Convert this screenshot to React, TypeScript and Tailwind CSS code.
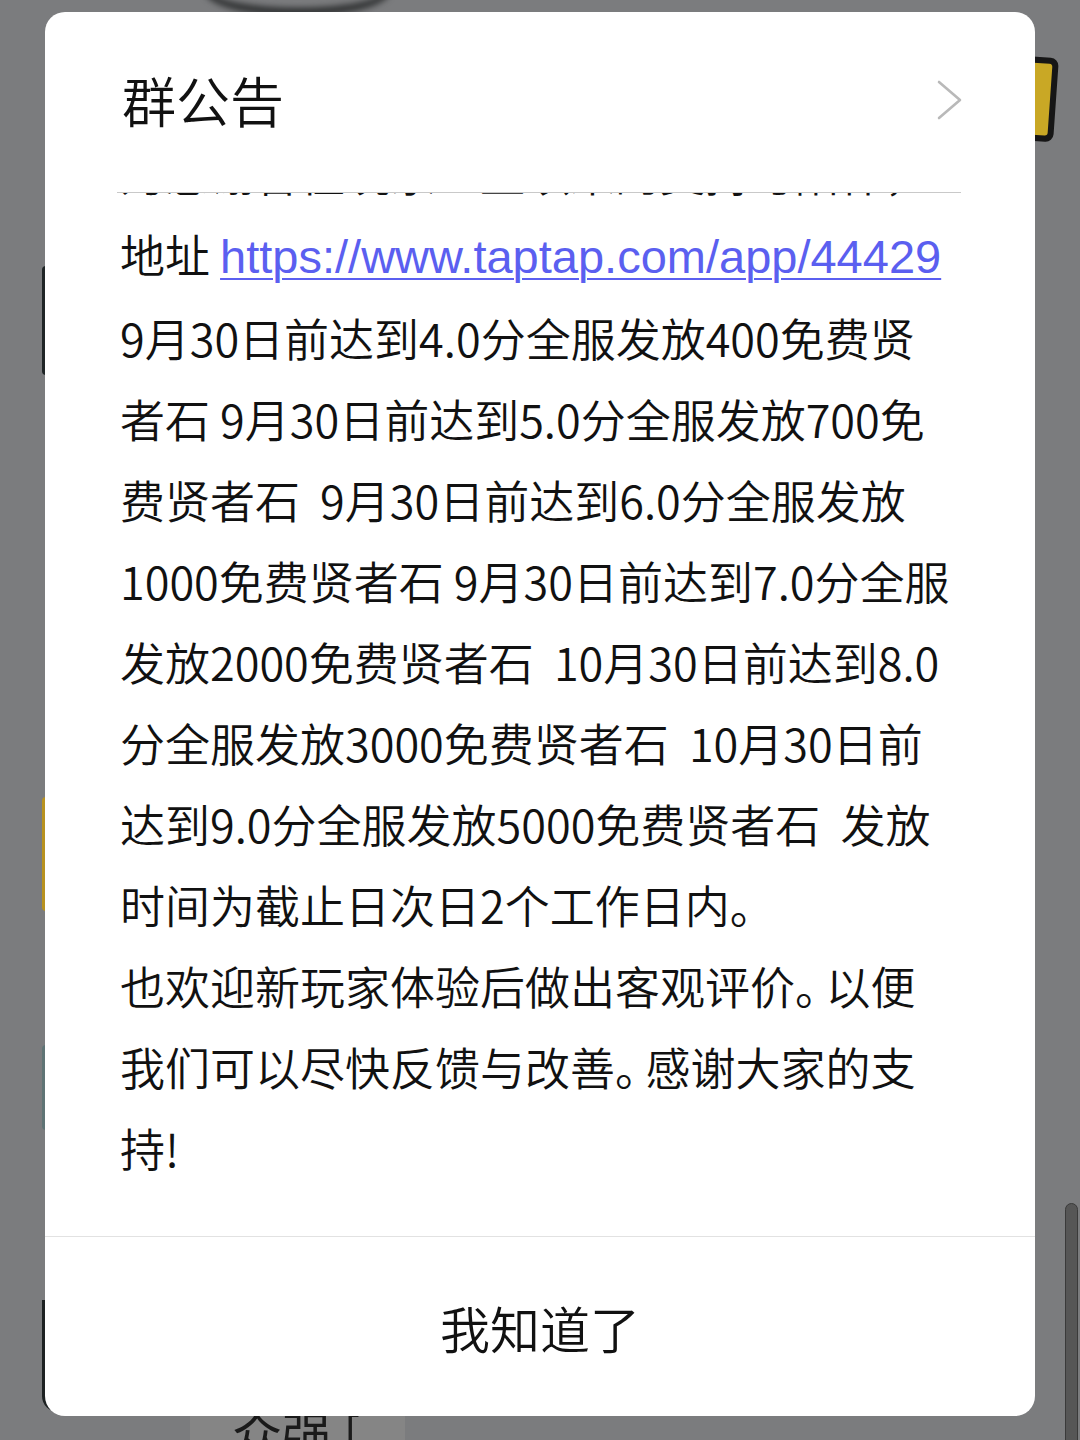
import React from "react";

const cjk = { fontFamily: '"Noto Sans CJK SC", "Noto Sans", sans-serif' };

// the full stop is set narrower than a full cell in the screenshot
const withStops = (text: string) =>
  text.split("。").flatMap((part, i, arr) =>
    i < arr.length - 1
      ? [
          part,
          <span key={i} className="mr-[8px] [font-feature-settings:'halt']">
            。
          </span>,
        ]
      : [part]
  );

// lines of the notice, wrapped as in the screenshot
const noticeLines: React.ReactNode[] = [
  "为感谢各位玩家一直以来的支持与陪伴，TapTap评价",
  <>
    地址{" "}
    <a
      href="#"
      className="text-[47px] font-normal text-[#5b5ff0] underline decoration-[2px] underline-offset-[5px]"
      style={{ fontFamily: '"Liberation Sans", Arial, sans-serif' }}
    >
      https://www.taptap.com/app/44429
    </a>
  </>,
  "9月30日前达到4.0分全服发放400免费贤",
  "者石 9月30日前达到5.0分全服发放700免",
  "费贤者石  9月30日前达到6.0分全服发放",
  "1000免费贤者石 9月30日前达到7.0分全服",
  "发放2000免费贤者石  10月30日前达到8.0",
  "分全服发放3000免费贤者石  10月30日前",
  "达到9.0分全服发放5000免费贤者石  发放",
  withStops("时间为截止日次日2个工作日内。"),
  withStops("也欢迎新玩家体验后做出客观评价。以便"),
  withStops("我们可以尽快反馈与改善。感谢大家的支"),
  "持!",
];

const ChevronRight: React.FC = () => (
  <svg width="26" height="40" viewBox="0 0 26 40" fill="none">
    <polyline
      points="2,2 23,20 2,38"
      stroke="#b9b9b9"
      strokeWidth="2.6"
      strokeLinecap="round"
      strokeLinejoin="round"
    />
  </svg>
);

const App: React.FC = () => {
  return (
    <div
      className="relative h-[1440px] w-full overflow-hidden bg-[#7b7c7e]"
      style={cjk}
    >
      {/* page behind the dialog, mostly hidden */}
      <div className="absolute left-[205px] top-[-34px] h-[50px] w-[185px] rounded-[50%] border-[8px] border-[#2b2d2e] blur-[3px]" />
      <div className="absolute left-[1018px] top-[57px] h-[84px] w-[38px] rotate-[4deg] rounded-[8px] bg-[#161616] p-[6px]">
        <div className="h-full w-full rounded-[3px] bg-[#c9a825]" />
      </div>
      <div className="absolute left-[42px] top-[266px] flex h-[1146px] w-[20px] flex-col">
        <div className="h-[109px] rounded-l-[4px] bg-[#1f2526]" />
        <div className="mt-[422px] h-[114px] rounded-l-[4px] bg-[#b8921f]" />
        <div className="mt-[134px] h-[85px] rounded-l-[4px] bg-[#5f7475]" />
        <div className="mt-[170px] h-[112px] rounded-bl-[16px] bg-[#1d2122]" />
      </div>
      <div className="absolute left-[190px] top-[1380px] h-[80px] w-[215px] bg-[#858585] pl-[42px] pt-[22px] text-[50px] leading-[60px] text-[#1a1a1a]">
        众强 [
      </div>
      <div className="absolute right-[2px] top-[1203px] h-[260px] w-[13px] rounded-t-full border border-[#3a3a3a] bg-[#565656]" />

      <div className="relative pt-[12px] px-[45px]">
        <div className="flex h-[1404px] flex-col overflow-hidden rounded-[20px] bg-white text-[#111] font-[350]">
          <div className="flex h-[180px] shrink-0 items-center justify-between pl-[77px] pr-[72px] pb-[4px]">
            <h1 className="text-[54px] leading-none font-[350]">群公告</h1>
            <ChevronRight />
          </div>

          <div className="ml-[72px] mr-[74px] flex-1 overflow-hidden border-t border-[#c9c9c9]">
            <div className="-mt-[61px] pl-[3px] text-[45px] leading-[81px]">
              {noticeLines.map((line, i) => (
                <div key={i} className="whitespace-pre">
                  {line}
                </div>
              ))}
            </div>
          </div>

          <div className="h-px shrink-0 bg-[#e2e2e2]" />
          <button className="flex h-[179px] shrink-0 items-center justify-center text-[50px] leading-none font-[350] text-[#111]">
            我知道了
          </button>
        </div>
      </div>
    </div>
  );
};

export default App;
